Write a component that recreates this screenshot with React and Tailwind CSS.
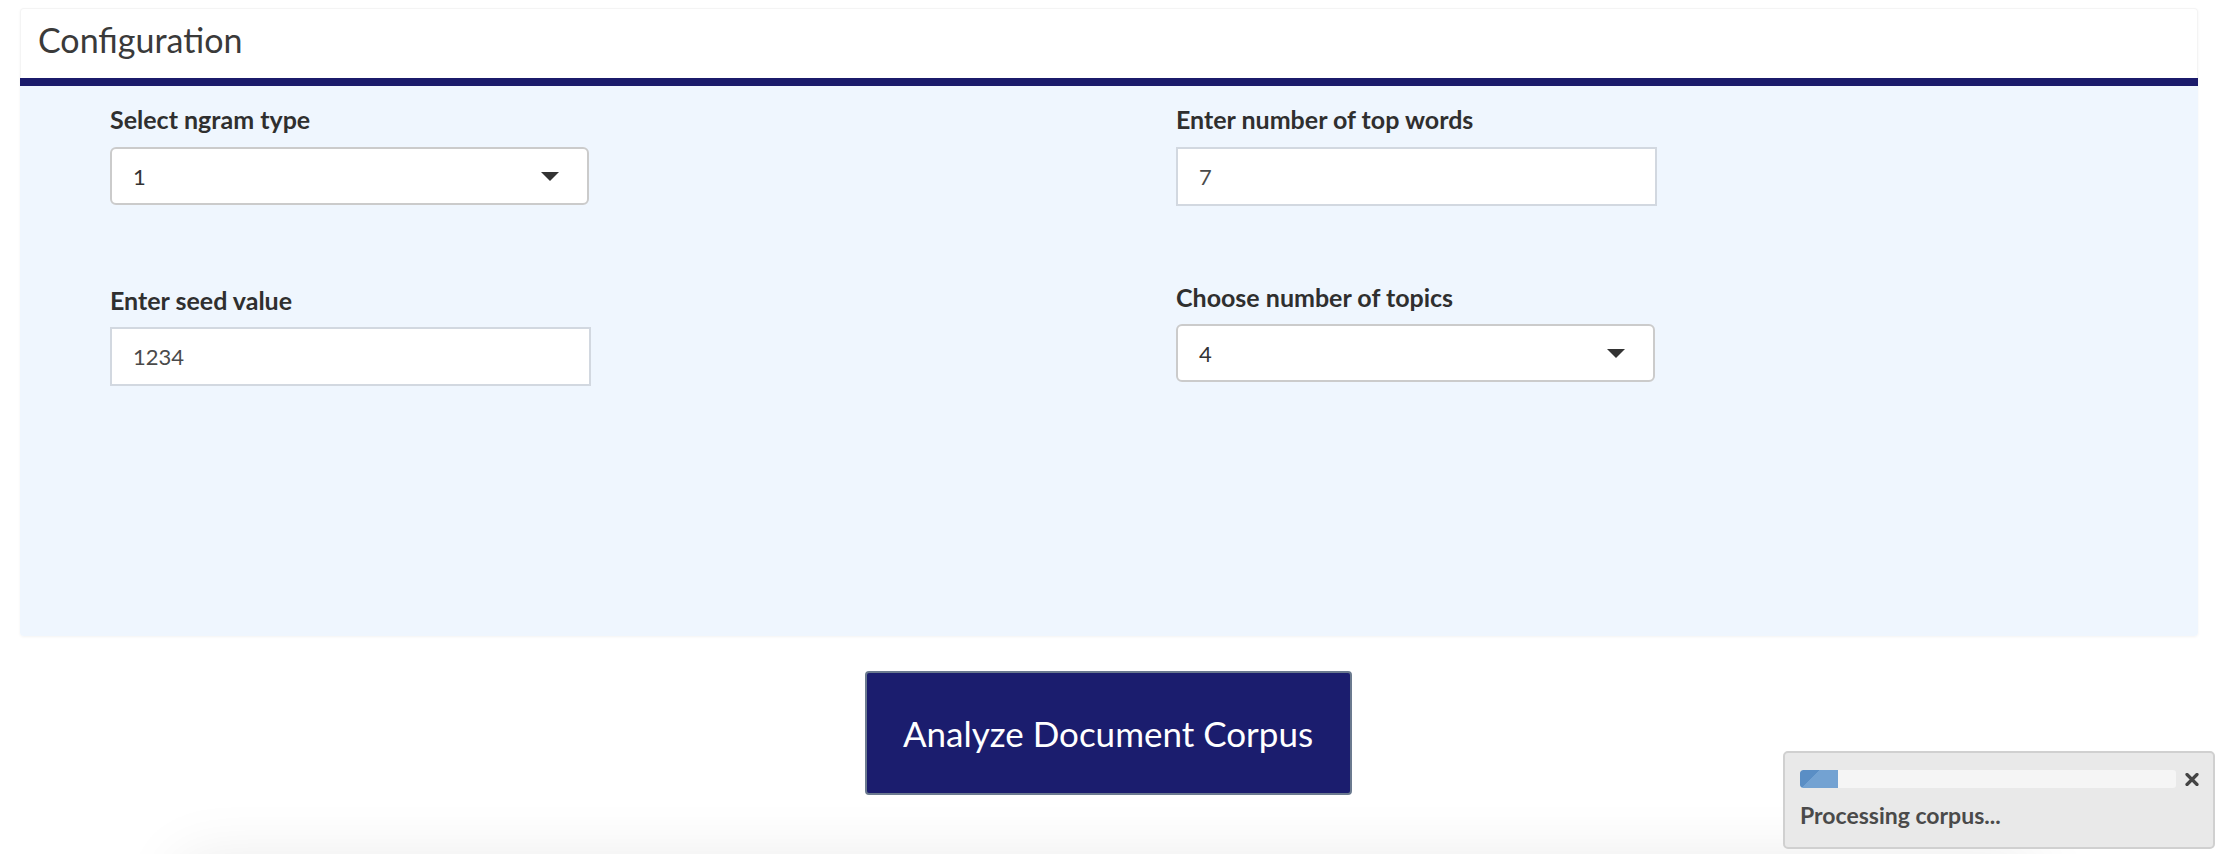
import React from "react";

function Label({ children }) {
  return (
    <div className="text-[25px] leading-[29px] font-bold text-[#2f2f2f]">{children}</div>
  );
}

function SelectBox({ value }) {
  return (
    <div className="w-[479px] h-[58px] rounded-[6px] border-2 border-[#cbcbcb] bg-white flex items-center justify-between pl-[21px] pr-[28px]">
      <span className="text-[22px] text-[#333333]">{value}</span>
      <svg width="18" height="9" viewBox="0 0 18 9">
        <polygon points="0,0 18,0 9,9" fill="#333333" />
      </svg>
    </div>
  );
}

function InputBox({ value }) {
  return (
    <div className="w-[481px] h-[59px] border-2 border-[#d2d8e0] bg-white flex items-center pl-[21px]">
      <span className="text-[22px] text-[#4a4a4a]">{value}</span>
    </div>
  );
}

export default function App() {
  return (
    <div className="min-h-screen bg-white font-['Lato',sans-serif] pt-2 overflow-hidden">
      <div className="ml-5 mr-[18px] rounded-[4px] shadow-[0_1px_3px_rgba(0,0,0,0.05)]">
        <div className="h-[70px] flex items-center pl-[17px] pb-[8px] bg-white border border-b-0 border-[#f4f4f4] rounded-t-[4px]">
          <h3 className="text-[34px] leading-none text-[#3a3a3a]">Configuration</h3>
        </div>
        <div className="h-2 bg-[#1b1b6b]" />
        <div className="h-[550px] bg-[#eff6fe] rounded-b-[4px] pt-[19px] pl-[90px] grid grid-cols-[1066px_481px] content-start">
          <div className="flex flex-col">
            <Label>Select ngram type</Label>
            <div className="mt-[13px]">
              <SelectBox value="1" />
            </div>
            <div className="mt-[81px]">
              <Label>Enter seed value</Label>
            </div>
            <div className="mt-[12px]">
              <InputBox value="1234" />
            </div>
          </div>
          <div className="flex flex-col">
            <Label>Enter number of top words</Label>
            <div className="mt-[13px]">
              <InputBox value="7" />
            </div>
            <div className="mt-[77px]">
              <Label>Choose number of topics</Label>
            </div>
            <div className="mt-[12px]">
              <SelectBox value="4" />
            </div>
          </div>
        </div>
      </div>

      <div className="flex justify-center mt-[35px]">
        <button className="w-[487px] h-[124px] bg-[#1b1d6e] border-2 border-[#6b7a8f] rounded-[4px] text-white text-[35px] flex items-center justify-center">
          Analyze Document Corpus
        </button>
      </div>

      <div className="mt-[65px] mx-[180px] h-[200px] bg-white shadow-[0_0_60px_rgba(0,0,0,0.09)]" />

      <div className="fixed right-[1px] bottom-[5px] w-[432px] h-[98px] bg-[#e9e9e9] border-2 border-[#d0d0d0] rounded-[5px] pl-[15px] pr-[14px] pt-[17px]">
        <div className="flex items-center">
          <div className="flex-1 h-[18px] bg-[#f5f5f5] rounded-[3px] overflow-hidden">
            <div className="w-[38px] h-full rounded-l-[3px] bg-[linear-gradient(135deg,#5a8ec5_35%,#73a2d2_35%)]" />
          </div>
          <svg className="ml-[9px]" width="14" height="13" viewBox="0 0 14 13">
            <line x1="2" y1="1.5" x2="12" y2="11.5" stroke="#444444" strokeWidth="3.2" strokeLinecap="round" />
            <line x1="12" y1="1.5" x2="2" y2="11.5" stroke="#444444" strokeWidth="3.2" strokeLinecap="round" />
          </svg>
        </div>
        <div className="mt-[14px] text-[23px] leading-[27px] font-bold text-[#4a4a4a]">Processing corpus...</div>
      </div>
    </div>
  );
}
